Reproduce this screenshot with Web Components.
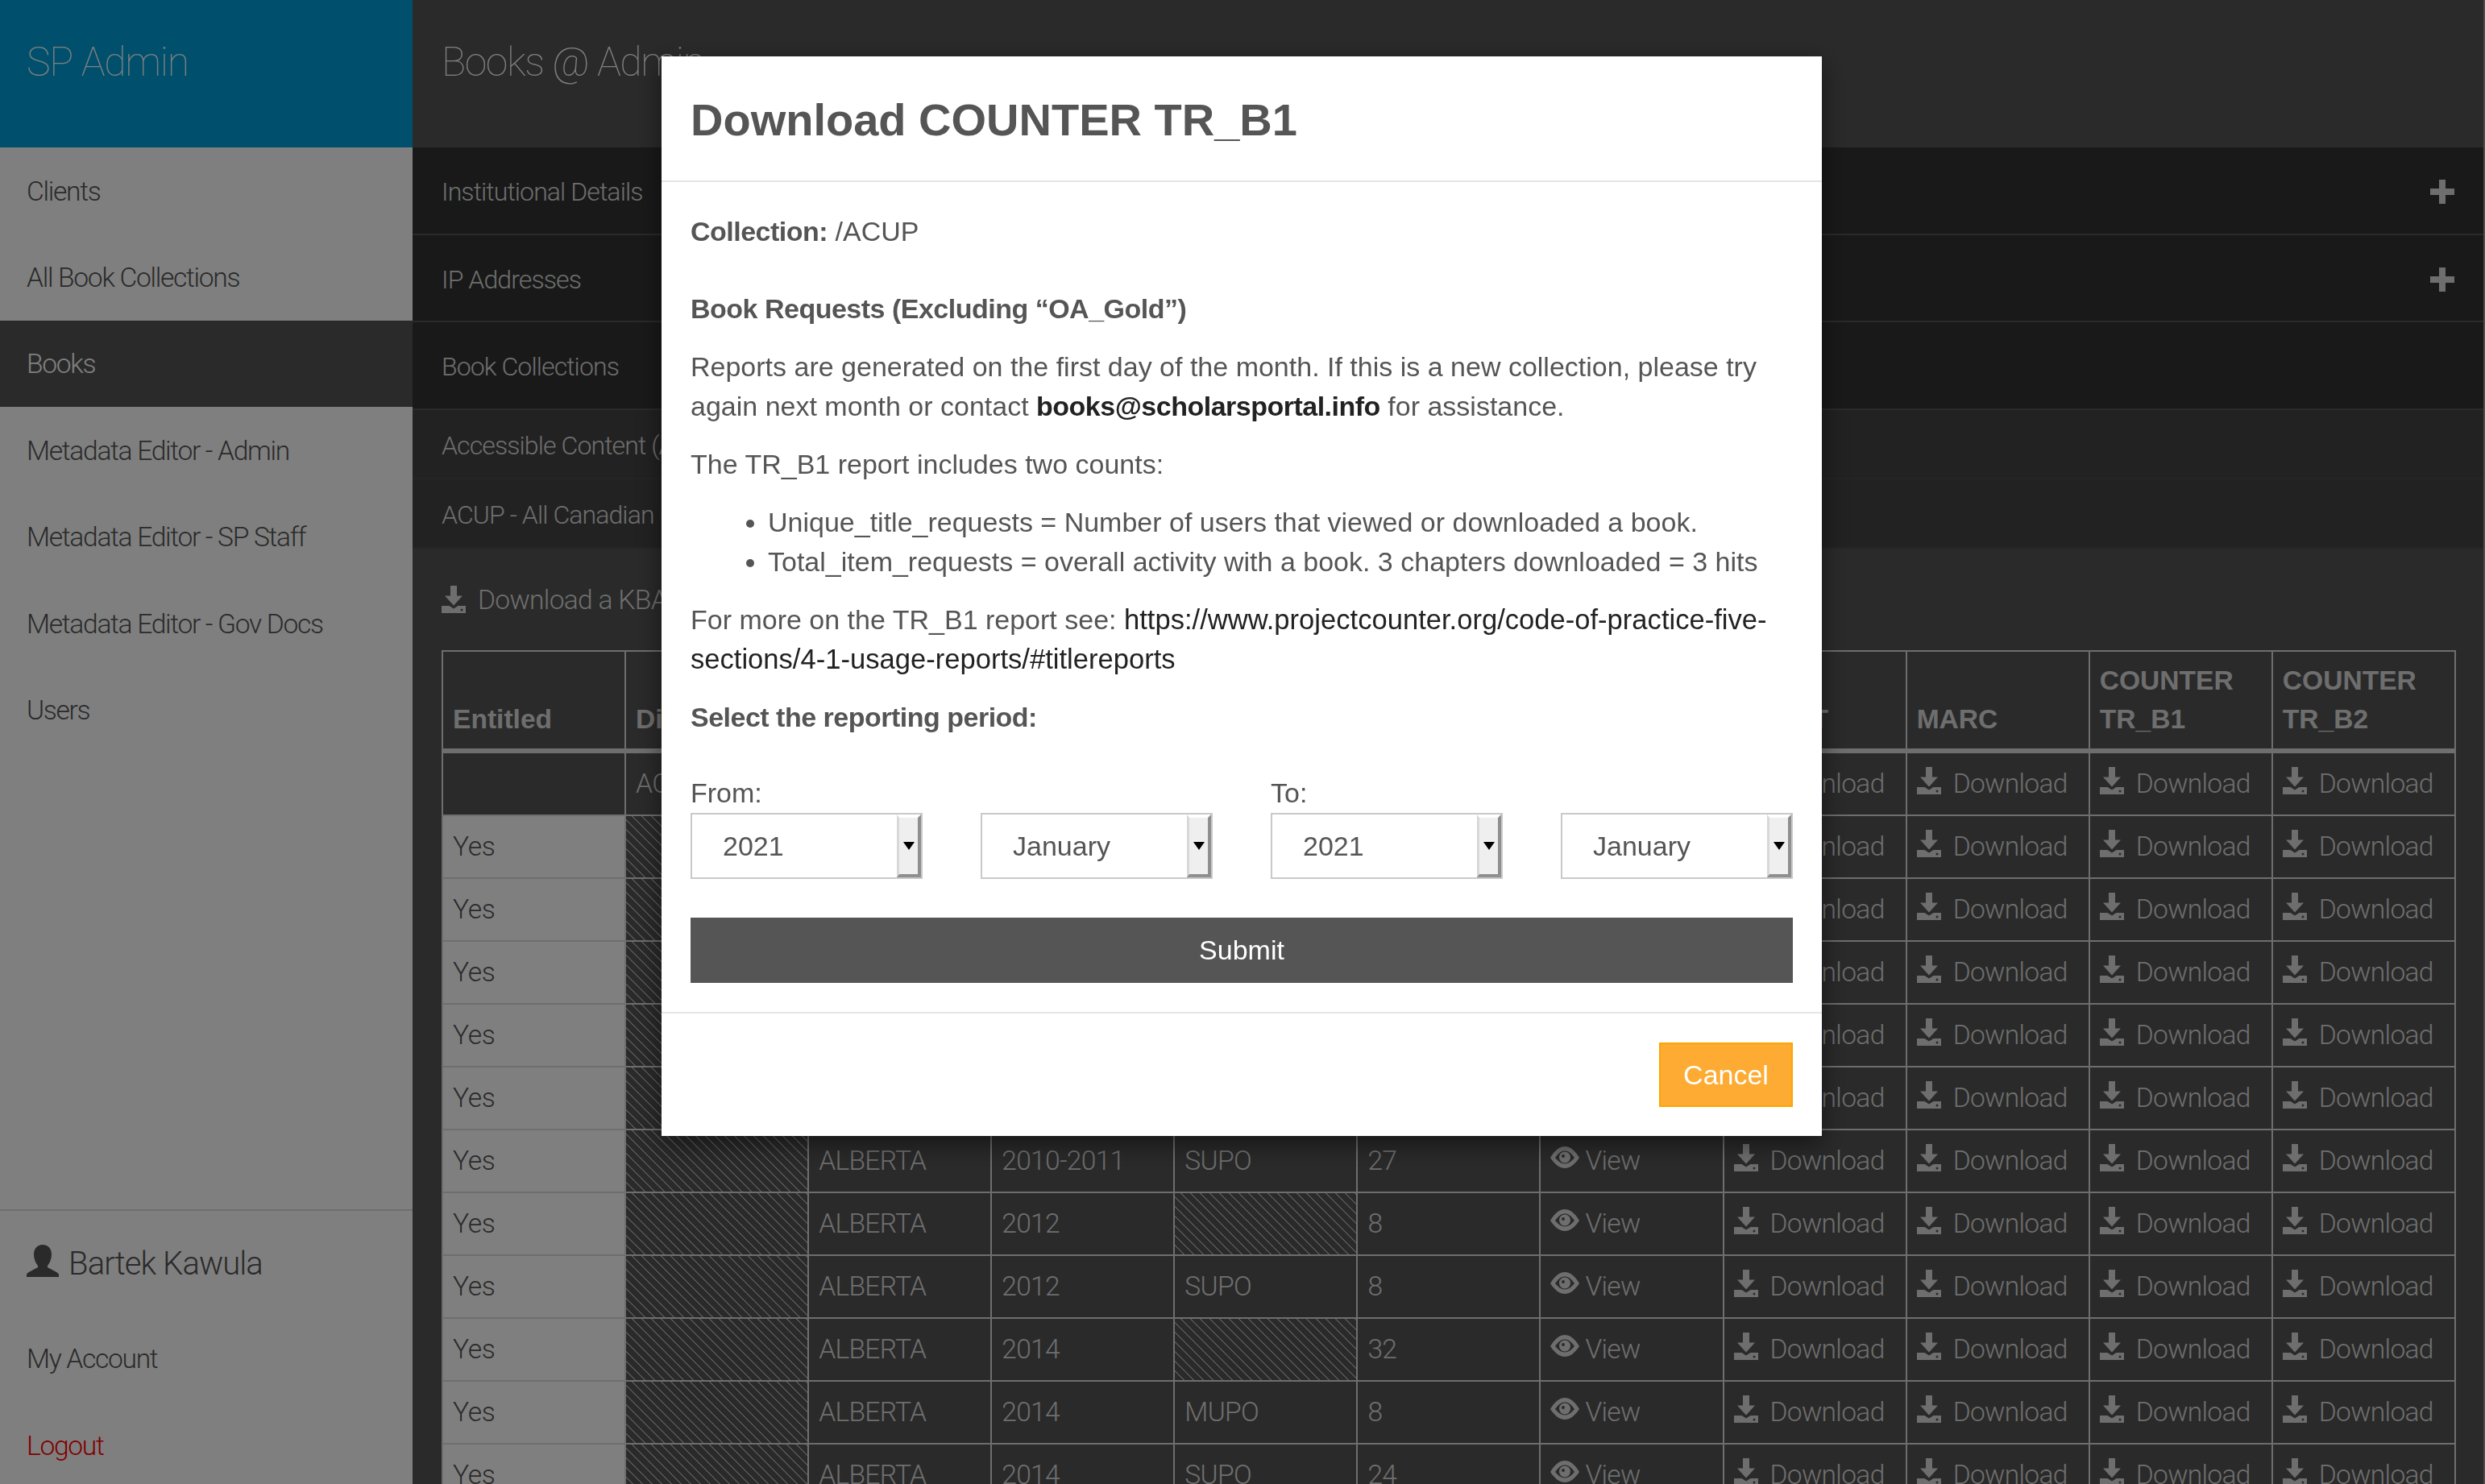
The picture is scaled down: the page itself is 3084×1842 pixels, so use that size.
<!DOCTYPE html>
<html lang="en">
<head>
<meta charset="utf-8">
<title>Books @ Admin</title>
<style>
  html, body { margin: 0; height: 100%; overflow: hidden; background: #555; }
  body { font-family: "Liberation Sans", Arial, sans-serif; }
</style>
</head>
<body>
<sp-app>
  <sp-sidebar slot="side"></sp-sidebar>
  <sp-content slot="main"></sp-content>
</sp-app>
<sp-modal>
  <span slot="title">Download COUNTER TR_B1</span>
  <counter-form></counter-form>
</sp-modal>

<script>
const LIGHT = `"Roboto", "Liberation Sans", Arial, sans-serif`;

const ICONS = {
  download: `<svg viewBox="0 0 30 34" width="30" height="34" fill="currentColor"><path d="M11 0h8v12.500h7L15 24.500 4 12.500h7z"/><path fill-rule="evenodd" d="M0 25h9.500l5.500 3.500 5.500-3.500H30v9H0zM25 28.500a1.500 1.500 0 1 0 0 3 1.500 1.500 0 0 0 0-3z"/></svg>`,
  eye: `<svg viewBox="0 0 36 27" width="36" height="27" fill="currentColor"><path fill-rule="evenodd" d="M0 14C6 4 12 0 18 0s12 4 18 14c-6 9-12 13-18 13S6 23 0 14zM6 14c4 5 8 7.500 12 7.500s8-2.500 12-7.500c-4-6-8-8.500-12-8.500S10 8 6 14z"/><path fill-rule="evenodd" d="M18 6.500a7 7 0 1 1 0 14 7 7 0 0 1 0-14zM16 10a2 2 0 1 0 0 4 2 2 0 0 0 0-4z"/></svg>`,
  user: `<svg viewBox="0 0 40 40" width="40" height="40" fill="currentColor"><path d="M20 0c7 0 11 5 11 12 0 6-3 12-5 14v2c4 3 12 5 14 9v3H0v-3c2-4 10-6 14-9v-2c-2-2-5-8-5-14C9 5 13 0 20 0z"/></svg>`,
  plus: `<svg viewBox="0 0 30 30" width="30" height="30" fill="currentColor"><path d="M11 0h8v11h11v8H19v11h-8V19H0v-8h11z"/></svg>`
};

class SpApp extends HTMLElement {
  constructor() {
    super();
    this.attachShadow({ mode: 'open' }).innerHTML = `
      <style>
        :host { display: grid; grid-template-columns: 512px 1fr; height: 1842px; overflow: hidden; }
      </style>
      <slot name="side"></slot>
      <slot name="main"></slot>`;
  }
}

class SpSidebar extends HTMLElement {
  constructor() {
    super();
    const items = ['Clients', 'All Book Collections', 'Books', 'Metadata Editor - Admin', 'Metadata Editor - SP Staff', 'Metadata Editor - Gov Docs', 'Users'];
    this.attachShadow({ mode: 'open' }).innerHTML = `
      <style>
        :host { display: flex; flex-direction: column; height: 1842px; overflow: hidden; background: #fff; font-family: ${LIGHT}; font-weight: 300; color: #555; }
        .brand { flex: 0 0 183px; box-sizing: border-box; padding: 45px 33px 0; background: #00a0da; color: #fff; font-size: 50px; line-height: 64px; font-weight: 100; letter-spacing: -1.300px; }
        a { display: flex; align-items: center; flex: 0 0 auto; box-sizing: border-box; height: 107.400px; padding: 1px 33px 0; font-size: 33.600px; letter-spacing: -1.300px; }
        a.on { background: #555; color: #fff; }
        .foot { margin-top: 566px; border-top: 2px solid #ddd; }
        .who { display: flex; align-items: center; gap: 12px; height: 130px; padding: 2px 33px 0; box-sizing: border-box; font-size: 40px; letter-spacing: -.900px; }
        .who svg { margin-top: -8px; }
        .logout { color: #f00; }
      </style>
      <div class="brand">SP Admin</div>
      ${items.map(i => `<a class="${i === 'Books' ? 'on' : ''}">${i}</a>`).join('')}
      <div class="foot">
        <div class="who">${ICONS.user}<span>Bartek Kawula</span></div>
        <a>My Account</a>
        <a class="logout">Logout</a>
      </div>`;
  }
}

class SpContent extends HTMLElement {
  constructor() {
    super();
    this.attachShadow({ mode: 'open' }).innerHTML = `
      <style>
        :host { display: block; box-sizing: border-box; height: 1842px; overflow: hidden; background: #555; border-right: 2px solid #999; color: #ddd; font-family: ${LIGHT}; font-weight: 300; }
        h1 { margin: 0; height: 183px; box-sizing: border-box; padding: 45px 36px 0; font-size: 50px; line-height: 64px; font-weight: 100; letter-spacing: -1.400px; color: #fff; }
        .dl { display: flex; align-items: center; gap: 15px; height: 126px; padding: 0 36px; font-size: 33.600px; letter-spacing: -.700px; }
      </style>
      <h1>Books @ Admin</h1>
      <acc-row dark plus>Institutional Details</acc-row>
      <acc-row dark plus style="height:108px">IP Addresses</acc-row>
      <acc-row dark>Book Collections</acc-row>
      <acc-row>Accessible Content (AODA)</acc-row>
      <acc-row>ACUP - All Canadian University Presses</acc-row>
      <div class="dl">${ICONS.download}<span>Download a KBART file</span></div>
      <book-table></book-table>`;
  }
}

class AccRow extends HTMLElement {
  constructor() {
    super();
    this.attachShadow({ mode: 'open' }).innerHTML = `
      <style>
        :host { display: flex; align-items: center; justify-content: space-between; box-sizing: border-box; height: 86px; padding: 3px 36px 0 36px; background: #444; border-bottom: 2px solid #4a4a4a; font-size: 32px; letter-spacing: -.900px; }
        :host([dark]) { height: 109px; background: #333; border-bottom-color: #555; }
      </style>
      <span><slot></slot></span>
      ${this.hasAttribute('plus') ? ICONS.plus : ''}`;
  }
}

class BookTable extends HTMLElement {
  constructor() {
    super();
    const heads = ['Entitled', 'Distributor', 'Collection', 'Years', 'Publisher', 'Titles', 'View', 'KBART', 'MARC', 'COUNTER<br>TR_B1', 'COUNTER<br>TR_B2'];
    const rows = [
      ['ALBERTA', '2005-2009', 'SUPO', '40'], ['ALBERTA', '2006', 'SUPO', '12'], ['ALBERTA', '2007', 'SUPO', '14'],
      ['ALBERTA', '2008', 'SUPO', '18'], ['ALBERTA', '2009', 'SUPO', '21'], ['ALBERTA', '2010-2011', 'SUPO', '27'],
      ['ALBERTA', '2012', '', '8'], ['ALBERTA', '2012', 'SUPO', '8'], ['ALBERTA', '2014', '', '32'],
      ['ALBERTA', '2014', 'MUPO', '8'], ['ALBERTA', '2014', 'SUPO', '24']
    ];
    const dl = `<td><span class="lnk">${ICONS.download}Download</span></td>`;
    const view = `<td><span class="lnk eye">${ICONS.eye}View</span></td>`;
    this.attachShadow({ mode: 'open' }).innerHTML = `
      <style>
        :host { display: block; margin-left: 36px; width: 2500px; font-size: 33.600px; line-height: 48px; letter-spacing: -.700px; }
        table { border-collapse: collapse; table-layout: fixed; width: 2500px; }
        th, td { border: 2px solid #ddd; padding: 14px 12px; text-align: left; white-space: nowrap; overflow: hidden; }
        th { padding: 12px; vertical-align: bottom; border-bottom-width: 6px; font-family: "Liberation Sans", Arial, sans-serif; font-weight: 700; letter-spacing: 0; }
        .yes { background: #fff; color: #555; letter-spacing: -.300px; }
        .hatch { background: repeating-linear-gradient(45deg, #555 0 7.300px, #aaa 7.300px 8.500px); }
        .lnk { display: flex; align-items: center; gap: 15px; }
        .lnk svg { margin-top: -8px; flex: none; }
        .eye { gap: 7px; }
        .eye svg { margin-top: -10px; }
      </style>
      <table>
        <thead><tr>${heads.map(h => `<th>${h}</th>`).join('')}</tr></thead>
        <tbody>
          <tr><td></td><td>ACUP</td><td></td><td></td><td></td><td></td><td></td>${dl}${dl}${dl}${dl}</tr>
          ${rows.map(r => `<tr><td class="yes">Yes</td><td class="hatch"></td><td>${r[0]}</td><td>${r[1]}</td><td class="${r[2] ? '' : 'hatch'}">${r[2]}</td><td>${r[3]}</td>${view}${dl}${dl}${dl}${dl}</tr>`).join('')}
        </tbody>
      </table>`;
  }
}

class SpModal extends HTMLElement {
  constructor() {
    super();
    this.attachShadow({ mode: 'open' }).innerHTML = `
      <style>
        :host { display: flex; align-items: flex-start; justify-content: center; position: fixed; inset: 0; padding: 70px 2px 0 0; background: rgba(0, 0, 0, .5); font-family: "Liberation Sans", Arial, sans-serif; color: #555; }
        .dialog { width: 1440px; background: #fff; box-shadow: 0 10px 30px rgba(0, 0, 0, .5); }
        header { box-sizing: border-box; height: 156px; padding: 2px 36px 0; display: flex; align-items: center; border-bottom: 2px solid #e5e5e5; font-size: 56px; font-weight: 700; }
        footer { display: flex; justify-content: flex-end; padding: 36px; border-top: 2px solid #e5e5e5; }
      </style>
      <div class="dialog">
        <header><slot name="title"></slot></header>
        <slot></slot>
        <footer><sp-button warn>Cancel</sp-button></footer>
      </div>`;
  }
}

class SpButton extends HTMLElement {
  constructor() {
    super();
    this.attachShadow({ mode: 'open' }).innerHTML = `
      <style>
        :host { display: flex; align-items: center; justify-content: center; box-sizing: border-box; height: 81px; background: #555; color: #fff; font-size: 34px; }
        :host([warn]) { width: 166px; height: 80px; background: #fdab33; border: 2px solid #fda500; }
      </style>
      <slot></slot>`;
  }
}

class SpSelect extends HTMLElement {
  constructor() {
    super();
    this.attachShadow({ mode: 'open' }).innerHTML = `
      <style>
        :host { display: flex; box-sizing: border-box; height: 82px; background: #fff; border: 2px solid #c9c9c9; color: #555; font-size: 34px; }
        .val { flex: 1; display: flex; align-items: center; padding-left: 38px; }
        .btn { display: flex; align-items: center; justify-content: center; box-sizing: border-box; width: 30px; background: #efefef; border-style: solid; border-width: 4px 4px 4px 3px; border-color: #fff #8f8f8f #8f8f8f #d8d8d8; }
        .btn i { width: 0; height: 0; border: 7px solid transparent; border-top: 10px solid #000; border-bottom: 0; }
      </style>
      <div class="val"><slot></slot></div>
      <div class="btn"><i></i></div>`;
  }
}

class CounterForm extends HTMLElement {
  constructor() {
    super();
    this.attachShadow({ mode: 'open' }).innerHTML = `
      <style>
        :host { display: block; padding: 37px 36px 36px; font-size: 34px; line-height: 49px; }
        p { margin: 0 0 23px; }
        b { letter-spacing: -.500px; }
        .first { margin-bottom: 47px; }
        ul { margin: 0 0 23px; padding-left: 96px; }
        .dark { color: #222; }
        .url { font-size: 34.600px; line-height: 0; }
        .period { margin-bottom: 45px; }
        .dates { display: grid; grid-template-columns: repeat(4, 288px); column-gap: 72px; margin-bottom: 48px; }
        .dates label { grid-row: 1; }
      </style>
      <p class="first"><b>Collection:</b> /ACUP</p>
      <p><b>Book Requests (Excluding “OA_Gold”)</b></p>
      <p>Reports are generated on the first day of the month. If this is a new collection, please try again next month or contact <b class="dark">books@scholarsportal.info</b> for assistance.</p>
      <p>The TR_B1 report includes two counts:</p>
      <ul>
        <li>Unique_title_requests = Number of users that viewed or downloaded a book.</li>
        <li>Total_item_requests = overall activity with a book. 3 chapters downloaded = 3 hits</li>
      </ul>
      <p>For more on the TR_B1 report see: <span class="dark url">https://www.projectcounter.org/code-of-practice-five-sections/4-1-usage-reports/#titlereports</span></p>
      <p class="period"><b>Select the reporting period:</b></p>
      <div class="dates">
        <label>From:</label><label></label><label>To:</label><label></label>
        <sp-select>2021</sp-select><sp-select>January</sp-select><sp-select>2021</sp-select><sp-select>January</sp-select>
      </div>
      <sp-button>Submit</sp-button>`;
  }
}

customElements.define('sp-app', SpApp);
customElements.define('sp-sidebar', SpSidebar);
customElements.define('acc-row', AccRow);
customElements.define('book-table', BookTable);
customElements.define('sp-content', SpContent);
customElements.define('sp-button', SpButton);
customElements.define('sp-select', SpSelect);
customElements.define('sp-modal', SpModal);
customElements.define('counter-form', CounterForm);
</script>
</body>
</html>
